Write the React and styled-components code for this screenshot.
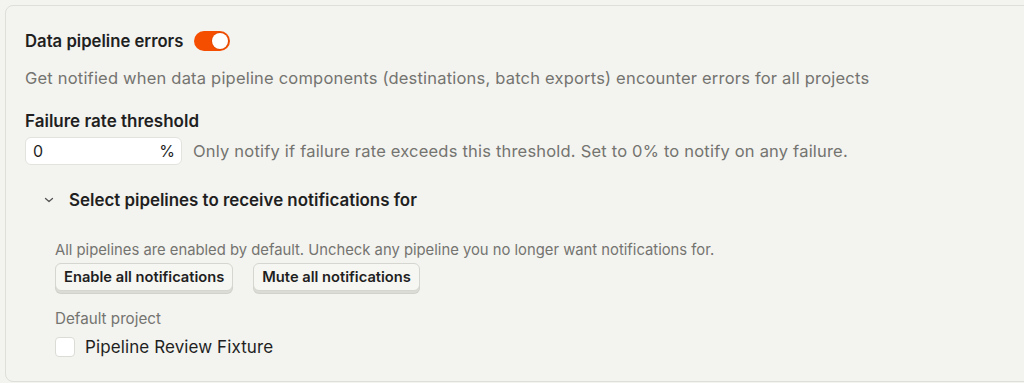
import React, { useState } from 'react';
import styled, { createGlobalStyle } from 'styled-components';

const GlobalStyle = createGlobalStyle`
  html, body {
    margin: 0;
    padding: 0;
    background: #f3f3ef;
    font-family: Inter, "Noto Sans", sans-serif;
    color: #1f1f1f;
    -webkit-font-smoothing: antialiased;
  }
`;

const Page = styled.div`
  padding: 5px 0 0 5px;
  overflow: hidden;
  height: 383px;
  box-sizing: border-box;
`;

const Card = styled.section`
  width: 1060px;
  border: 1px solid #dfdfd9;
  border-radius: 8px;
  background: #f3f3ef;
  padding: 23px 19px 24px;
  display: flex;
  flex-direction: column;
`;

const HeaderRow = styled.div`
  display: flex;
  align-items: center;
  gap: 11px;
  height: 24px;
`;

const Title = styled.h3`
  margin: 0;
  font-size: 16.7px;
  font-weight: 600;
  line-height: 24px;
`;

const Track = styled.button`
  width: 36px;
  height: 20px;
  border-radius: 10px;
  border: none;
  padding: 0 2px;
  display: flex;
  align-items: center;
  justify-content: ${(p) => (p.$on ? 'flex-end' : 'flex-start')};
  background: ${(p) => (p.$on ? '#f54e00' : '#c9c9c3')};
  cursor: pointer;
`;

const Knob = styled.span`
  width: 16px;
  height: 16px;
  border-radius: 50%;
  background: #fff;
  box-shadow: 0 0 0 1px rgba(0, 0, 0, 0.08);
`;

const Muted = styled.p`
  margin: ${(p) => p.$m || '0'};
  font-size: ${(p) => p.$size || 16.5}px;
  line-height: ${(p) => p.$lh || 22}px;
  letter-spacing: ${(p) => p.$ls ?? 0.2}px;
  color: #747470;
  white-space: nowrap;
`;

const Label = styled.label`
  display: block;
  margin-top: 20px;
  font-size: 17px;
  font-weight: 600;
  line-height: 24px;
`;

const InputRow = styled.div`
  display: flex;
  align-items: center;
  gap: 11px;
  margin-top: 4px;
`;

const InputBox = styled.div`
  width: 157px;
  height: 28px;
  box-sizing: border-box;
  border: 1px solid #e3e3de;
  border-radius: 6px;
  background: #fff;
  display: flex;
  align-items: center;
  padding: 0 6px 0 7px;
`;

const Input = styled.input`
  flex: 1;
  min-width: 0;
  border: none;
  outline: none;
  background: transparent;
  font: inherit;
  font-size: 16px;
  color: #1f1f1f;
  padding: 0;
`;

const Suffix = styled.span`
  font-size: 16px;
  color: #1f1f1f;
`;

const Collapse = styled.div`
  margin-top: 23px;
  padding-left: 17px;
`;

const CollapseHeader = styled.button`
  display: flex;
  align-items: center;
  gap: 13px;
  height: 24px;
  border: none;
  background: none;
  padding: 0;
  font: inherit;
  font-size: 16.9px;
  font-weight: 600;
  color: #1f1f1f;
  cursor: pointer;
`;

const Chevron = styled.svg`
  width: 14px;
  height: 14px;
  color: #555;
`;

const CollapseBody = styled.div`
  padding-left: 13px;
  margin-top: 28px;
  display: flex;
  flex-direction: column;
`;

const ButtonRow = styled.div`
  display: flex;
  gap: 20px;
  margin-top: 3px;
`;

const Button3D = styled.button`
  height: 28px;
  padding: 0 8px;
  border: 1px solid #d6d6d0;
  border-radius: 6px;
  background: #f6f6f2;
  box-shadow: 0 3px 0 -1px #dcdcd6, 0 3px 0 0 #d2d2cc;
  font: inherit;
  font-size: 14.7px;
  font-weight: 600;
  color: #1f1f1f;
  cursor: pointer;
`;

const CheckRow = styled.label`
  display: flex;
  align-items: center;
  gap: 10px;
  margin-top: 8px;
  font-size: 17px;
  line-height: 20px;
  letter-spacing: 0.1px;
  cursor: pointer;
`;

const Box = styled.span`
  width: 20px;
  height: 20px;
  box-sizing: border-box;
  border: 1px solid #dcdcd6;
  border-radius: 4px;
  background: #fff;
  display: flex;
  align-items: center;
  justify-content: center;
`;

export default function App() {
  const [enabled, setEnabled] = useState(true);
  const [checked, setChecked] = useState(false);
  const [rate, setRate] = useState('0');

  return (
    <>
      <GlobalStyle />
      <Page>
        <Card>
          <HeaderRow>
            <Title>Data pipeline errors</Title>
            <Track $on={enabled} onClick={() => setEnabled(!enabled)} aria-label="Toggle">
              <Knob />
            </Track>
          </HeaderRow>
          <Muted $m="14px 0 0">
            Get notified when data pipeline components (destinations, batch exports) encounter errors for all projects
          </Muted>

          <Label>Failure rate threshold</Label>
          <InputRow>
            <InputBox>
              <Input value={rate} onChange={(e) => setRate(e.target.value)} />
              <Suffix>%</Suffix>
            </InputBox>
            <Muted>Only notify if failure rate exceeds this threshold. Set to 0% to notify on any failure.</Muted>
          </InputRow>

          <Collapse>
            <CollapseHeader>
              <Chevron viewBox="0 0 14 14" fill="none">
                <path d="M3.5 5.5 7 8.5 10.5 5.5" stroke="currentColor" strokeWidth="1.3" strokeLinecap="round" strokeLinejoin="round" />
              </Chevron>
              Select pipelines to receive notifications for
            </CollapseHeader>
            <CollapseBody>
              <Muted $size={14.8} $lh={20} $ls={0}>
                All pipelines are enabled by default. Uncheck any pipeline you no longer want notifications for.
              </Muted>
              <ButtonRow>
                <Button3D>Enable all notifications</Button3D>
                <Button3D>Mute all notifications</Button3D>
              </ButtonRow>
              <Muted $size={15.2} $lh={20} $ls={0} $m="18px 0 0">Default project</Muted>
              <CheckRow onClick={() => setChecked(!checked)}>
                <Box>{checked ? '✓' : null}</Box>
                Pipeline Review Fixture
              </CheckRow>
            </CollapseBody>
          </Collapse>
        </Card>
      </Page>
    </>
  );
}
